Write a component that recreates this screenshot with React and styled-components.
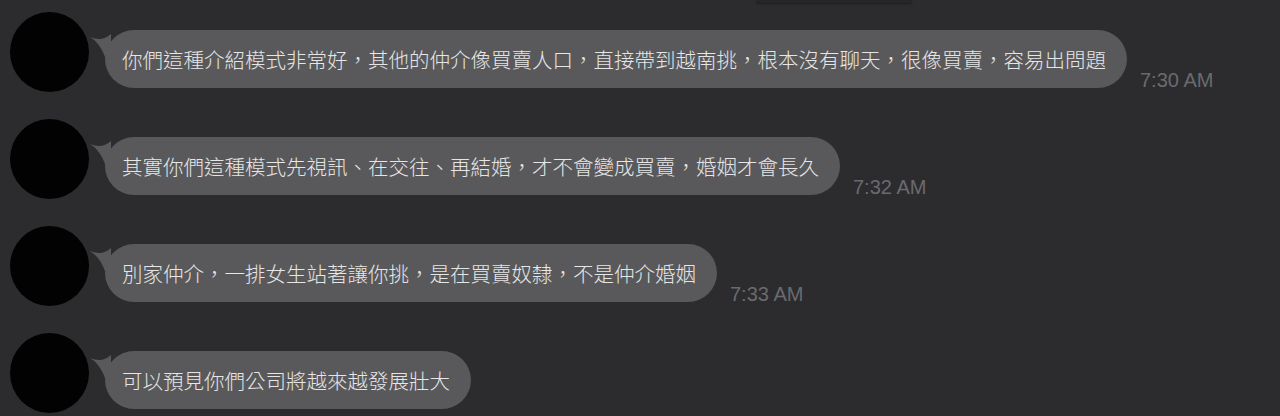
import React from 'react';
import styled, { createGlobalStyle } from 'styled-components';

const GlobalStyle = createGlobalStyle`
  html, body {
    margin: 0;
    padding: 0;
    background: #2c2c2f;
  }
  body {
    font-family: "Noto Sans CJK TC", "Noto Sans", sans-serif;
    overflow: hidden;
  }
`;

const messages = [
  { text: '你們這種介紹模式非常好，其他的仲介像買賣人口，直接帶到越南挑，根本沒有聊天，很像買賣，容易出問題', time: '7:30 AM' },
  { text: '其實你們這種模式先視訊、在交往、再結婚，才不會變成買賣，婚姻才會長久', time: '7:32 AM' },
  { text: '別家仲介，一排女生站著讓你挑，是在買賣奴隸，不是仲介婚姻', time: '7:33 AM' },
  { text: '可以預見你們公司將越來越發展壯大', time: '' },
];

const Screen = styled.div`
  width: 1280px;
  height: 416px;
  background: #2c2c2f;
  overflow: hidden;
`;

const PeekStrip = styled.div`
  height: 0;
  display: flex;
  padding-left: 756px;
`;

const PeekPill = styled.div`
  width: 156px;
  height: 3px;
  flex: none;
  background: #252628;
  border-radius: 0 0 14px 14px;
  box-shadow: 0 1px 2px rgba(0, 0, 0, 0.35);
`;

const List = styled.div`
  display: flex;
  flex-direction: column;
  gap: 27px;
  padding: 12px 0 0 10px;
`;

const Row = styled.div`
  display: flex;
  align-items: flex-start;
`;

const Avatar = styled.div`
  width: 79px;
  height: 80px;
  flex: none;
  border-radius: 50%;
  background: #020202;
`;

const BubbleLine = styled.div`
  display: flex;
  align-items: flex-end;
  margin-left: 16px;
  padding-top: 18px;
`;

const Bubble = styled.div`
  position: relative;
  height: 58px;
  display: flex;
  align-items: center;
  padding: 0 21px 0 17px;
  border-radius: 29px;
  background: #59595b;
  color: #e6e6e6;
  font-size: 20.5px;
  font-weight: 300;
  white-space: nowrap;
`;

const Tail = styled.svg`
  position: absolute;
  left: -16px;
  top: 0;
  width: 26px;
  height: 34px;
  overflow: visible;
`;

const Time = styled.span`
  margin-left: 13px;
  margin-bottom: -2px;
  font-family: "Liberation Sans", Arial, sans-serif;
  font-size: 20px;
  line-height: 20px;
  color: #6a6a6e;
  white-space: nowrap;
`;

export default function App() {
  return (
    <Screen>
      <GlobalStyle />
      <PeekStrip>
        <PeekPill />
      </PeekStrip>
      <List>
        {messages.map((m, i) => (
          <Row key={i}>
            <Avatar />
            <BubbleLine>
              <Bubble>
                <Tail viewBox="0 0 26 34">
                  <path
                    d="M1 7 C9 10 15 10 22 4 L22 30 L16 27 C13 19 9 12 1 7 Z"
                    fill="#59595b"
                  />
                </Tail>
                {m.text}
              </Bubble>
              {m.time && <Time>{m.time}</Time>}
            </BubbleLine>
          </Row>
        ))}
      </List>
    </Screen>
  );
}
